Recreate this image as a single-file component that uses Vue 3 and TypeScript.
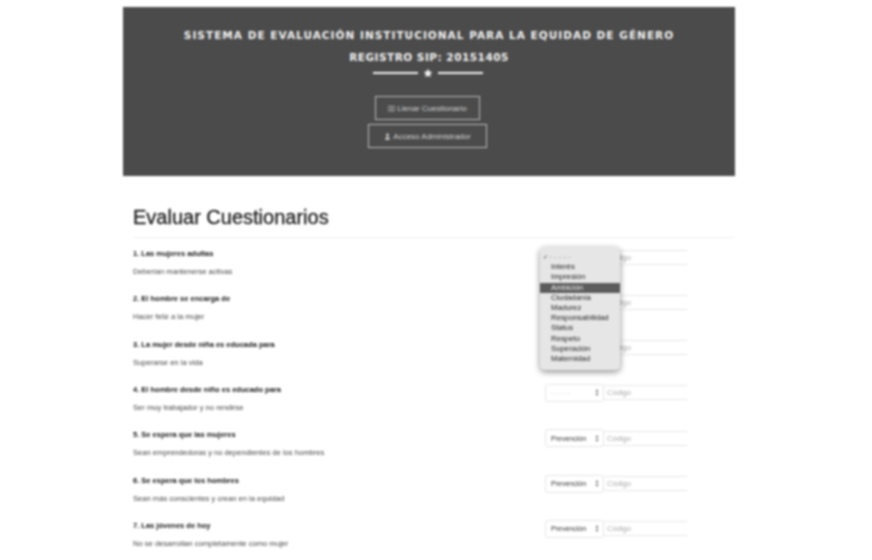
<script setup lang="ts">
interface Question {
  title: string
  answer: string
  value: string
  empty: boolean
}

const questions: Question[] = [
  { title: '1. Las mujeres adultas', answer: 'Deberían mantenerse activas', value: '- - - - -', empty: true },
  { title: '2. El hombre se encarga de', answer: 'Hacer feliz a la mujer', value: '- - - - -', empty: true },
  { title: '3. La mujer desde niña es educada para', answer: 'Superarse en la vida', value: '- - - - -', empty: true },
  { title: '4. El hombre desde niño es educado para', answer: 'Ser muy trabajador y no rendirse', value: '- - - - -', empty: true },
  { title: '5. Se espera que las mujeres', answer: 'Sean emprendedoras y no dependientes de los hombres', value: 'Prevención', empty: false },
  { title: '6. Se espera que los hombres', answer: 'Sean más conscientes y crean en la equidad', value: 'Prevención', empty: false },
  { title: '7. Las jóvenes de hoy', answer: 'No se desarrollan completamente como mujer', value: 'Prevención', empty: false },
]

const options: string[] = [
  'Interés', 'Impresión', 'Ambición', 'Ciudadanía', 'Madurez', 'Responsabilidad',
  'Status', 'Respeto', 'Superación', 'Maternidad',
]
</script>

<template>
  <div class="page">
    <header class="banner">
      <h1 class="title">SISTEMA DE EVALUACIÓN INSTITUCIONAL PARA LA EQUIDAD DE GÉNERO</h1>
      <h2 class="subtitle">REGISTRO SIP: 20151405</h2>
      <div class="divider">
        <span class="line"></span>
        <svg class="star" viewBox="0 0 24 24" aria-hidden="true">
          <path d="M12 1.5l3.2 6.8 7.3 1-5.3 5.1 1.3 7.4L12 18.3l-6.5 3.5 1.3-7.4L1.5 9.3l7.3-1z" />
        </svg>
        <span class="line"></span>
      </div>
      <a class="btn first-btn">
        <svg class="btn-icon" viewBox="0 0 12 12" aria-hidden="true">
          <path d="M1 2h4.5v8.5H1zM6.500 2H11v8.500H6.500z" fill="none" stroke="currentColor" />
        </svg>Llenar Cuestionario
      </a>
      <a class="btn second-btn">
        <svg class="btn-icon" viewBox="0 0 12 12" aria-hidden="true">
          <path d="M6 1a2.400 2.400 0 1 1 0 5 2.400 2.400 0 0 1 0-5zM2 11.500c0-3 1.500-4.700 4-4.700s4 1.700 4 4.700z" fill="currentColor" />
        </svg>Acceso Administrador
      </a>
    </header>

    <main class="content">
      <h3 class="heading">Evaluar Cuestionarios</h3>
      <div class="questions">
        <div v-for="q in questions" :key="q.title" class="row">
          <div class="text">
            <div class="q-title">{{ q.title }}</div>
            <div class="q-answer">{{ q.answer }}</div>
          </div>
          <div class="controls">
            <div class="select" :class="{ empty: q.empty }">
              <span>{{ q.value }}</span>
              <svg class="updown" viewBox="0 0 6 10" aria-hidden="true">
                <path d="M3 0l2 3.500H1zM3 10L1 6.500h4z" />
              </svg>
            </div>
            <div class="input">Código</div>
          </div>
        </div>
      </div>

      <ul class="menu">
        <li class="opt first"><span class="check">✓</span>- - - - -</li>
        <li v-for="o in options" :key="o" class="opt" :class="{ active: o === 'Ambición' }">{{ o }}</li>
      </ul>
    </main>
  </div>
</template>

<style>
html, body {
  background: #fff;
  overflow: hidden;
}
</style>

<style scoped>
.page {
  width: 872px;
  height: 560px;
  overflow: hidden;
  box-sizing: border-box;
  padding: 7px 137px 0 123px;
  font-family: "Liberation Sans", Arial, sans-serif;
  color: #333;
  filter: blur(0.8px);
}
.banner {
  height: 169px;
  background: #4b4b4b;
  box-sizing: border-box;
  padding-top: 21px;
  display: flex;
  flex-direction: column;
  align-items: center;
  color: #f2f2f2;
}
.title,
.subtitle {
  margin: 0;
  font-family: "DejaVu Sans", sans-serif;
  font-weight: 700;
  font-size: 10.5px;
  line-height: 14px;
  white-space: nowrap;
}
.title {
  letter-spacing: 1.03px;
}
.subtitle {
  margin-top: 8px;
  letter-spacing: 0.5px;
}
.divider {
  display: flex;
  align-items: center;
  gap: 5px;
  height: 10px;
  margin: 4px 3px 0 0;
}
.line {
  width: 45px;
  height: 1.5px;
  background: #f2f2f2;
}
.star {
  width: 10px;
  height: 10px;
  fill: #f2f2f2;
}
.btn {
  display: flex;
  align-items: center;
  justify-content: center;
  box-sizing: border-box;
  height: 24px;
  margin-top: 4px;
  border: 1px solid #bdbdbd;
  font-size: 8px;
  color: #d2d2d2;
  white-space: nowrap;
}
.first-btn {
  width: 105px;
  margin-top: 18px;
  margin-right: 3px;
}
.second-btn {
  width: 119px;
  margin-right: 3px;
}
.btn-icon {
  width: 7px;
  height: 7px;
  margin-right: 2px;
}
.content {
  position: relative;
  padding: 0 0 0 10px;
}
.heading {
  margin: 29px 0 0;
  font-size: 20px;
  line-height: 24px;
  font-weight: 400;
  color: #1c1c1c;
  -webkit-text-stroke: 0.3px #1c1c1c;
  padding-bottom: 8px;
  border-bottom: 1px solid #f1f1f1;
}
.questions {
  margin-top: 7px;
}
.row {
  display: flex;
  height: 45.33px;
  justify-content: space-between;
}
.q-title {
  font-size: 7.5px;
  font-weight: 700;
  line-height: 18px;
  color: #111;
  white-space: nowrap;
}
.q-answer {
  font-size: 7.6px;
  line-height: 18px;
  color: #444;
  white-space: nowrap;
}
.controls {
  display: flex;
  align-items: center;
  height: 18px;
  margin: 3px 47px 0 0;
}
.select {
  width: 59px;
  height: 18px;
  box-sizing: border-box;
  border: 1px solid #e6e6e6;
  border-radius: 3px;
  display: flex;
  align-items: center;
  justify-content: space-between;
  padding: 0 4px 0 5px;
  font-size: 7px;
  color: #333;
}
.select.empty {
  color: #ccc;
}
.updown {
  width: 4px;
  height: 7px;
  fill: #444;
}
.input {
  width: 84px;
  height: 15px;
  box-sizing: border-box;
  border-top: 1px solid #e8e8e8;
  border-bottom: 1px solid #e8e8e8;
  padding-left: 3px;
  font-size: 7.6px;
  line-height: 13px;
  color: #aaa;
}
.menu {
  position: absolute;
  left: 417px;
  top: 42px;
  width: 80px;
  height: 123px;
  box-sizing: border-box;
  margin: 0;
  padding: 5px 0 0;
  list-style: none;
  background: #e6e6e6;
  border-radius: 5px;
  box-shadow: 0 2px 6px rgba(0, 0, 0, 0.45);
}
.opt {
  position: relative;
  height: 10.2px;
  line-height: 10.2px;
  padding-left: 11px;
  font-size: 7.8px;
  color: #222;
  white-space: nowrap;
}
.opt.first {
  color: #999;
  padding-left: 9px;
}
.check {
  position: absolute;
  left: 3px;
  color: #333;
  font-size: 6px;
}
.opt.active {
  background: #5c5c5c;
  color: #eee;
}
</style>
